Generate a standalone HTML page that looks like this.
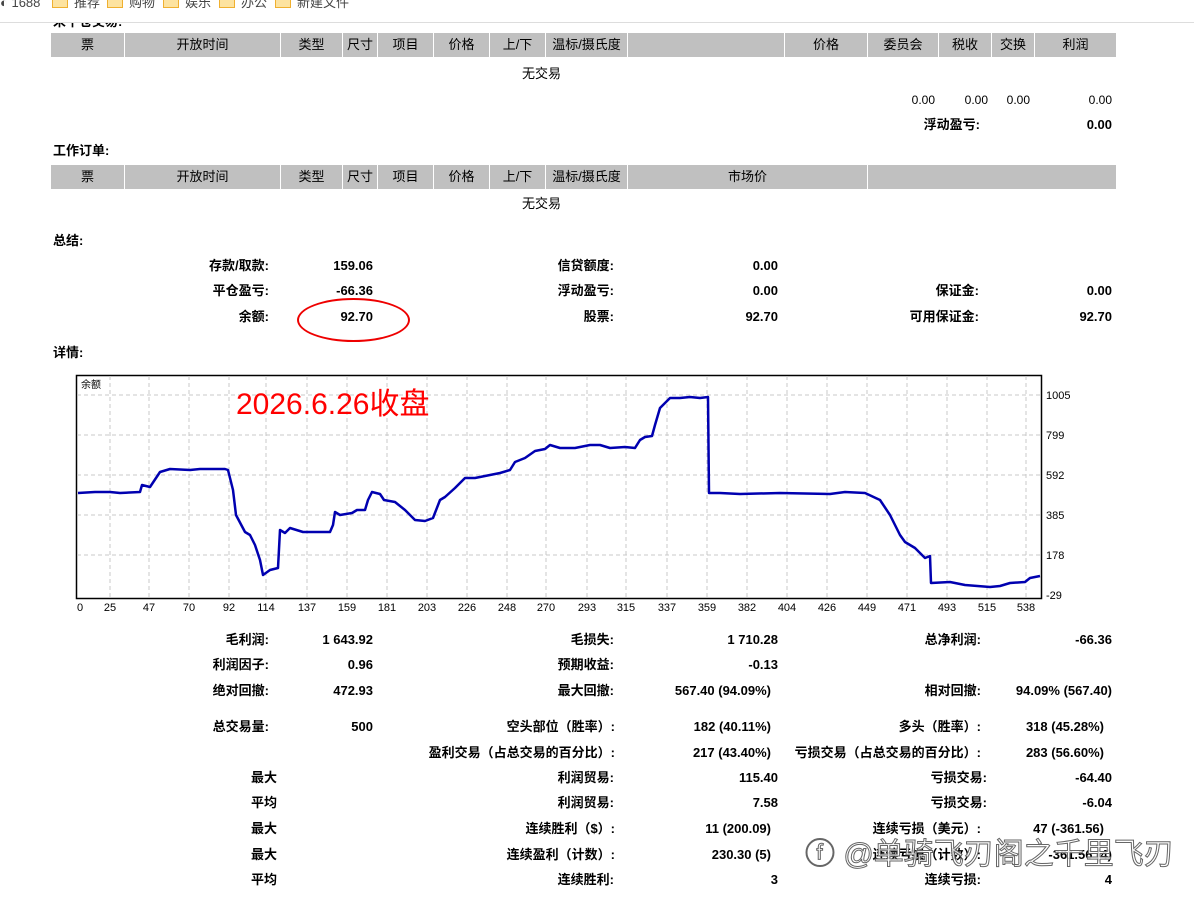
<!DOCTYPE html>
<html><head><meta charset="utf-8"><style>
body{margin:0;width:1194px;height:909px;background:#fff;position:relative;overflow:hidden;font-family:"Liberation Sans","Noto Sans CJK SC",sans-serif;font-size:13px;color:#000}
#w{position:absolute;left:0;top:1px;width:1194px;height:909px}
.a{position:absolute;line-height:16px;white-space:nowrap}
.b{font-weight:bold}
.h{position:absolute;background:#c0c0c0;height:24px;line-height:24px;text-align:center;font-size:13px}
.f{display:inline-block;width:14px;height:11px;background:#fde3a0;border:1px solid #f0b030;margin-right:6px;vertical-align:-1px}
.bm{position:absolute;top:-5px;color:#444;font-size:13px;line-height:16px;white-space:nowrap}
</style></head><body>
<div class="bm" style="left:0">◐ 1688</div>
<div class="bm" style="left:52px"><span class="f"></span>推荐</div>
<div class="bm" style="left:107px"><span class="f"></span>购物</div>
<div class="bm" style="left:163px"><span class="f"></span>娱乐</div>
<div class="bm" style="left:219px"><span class="f"></span>办公</div>
<div class="bm" style="left:275px"><span class="f"></span>新建文件</div>
<div style="position:absolute;left:0;top:22px;width:1194px;height:1px;background:#ddd"></div>
<div id="w">
<div class="a b" style="left:53px;top:13px;clip-path:inset(9px 0 0 0)">未平仓交易:</div>

<div class="h" style="left:51px;top:32px;width:73px">票</div>
<div class="h" style="left:125px;top:32px;width:155px">开放时间</div>
<div class="h" style="left:281px;top:32px;width:61px">类型</div>
<div class="h" style="left:343px;top:32px;width:34px">尺寸</div>
<div class="h" style="left:378px;top:32px;width:55px">项目</div>
<div class="h" style="left:434px;top:32px;width:55px">价格</div>
<div class="h" style="left:490px;top:32px;width:55px">上/下</div>
<div class="h" style="left:546px;top:32px;width:81px">温标/摄氏度</div>
<div class="h" style="left:628px;top:32px;width:156px"></div>
<div class="h" style="left:785px;top:32px;width:82px">价格</div>
<div class="h" style="left:868px;top:32px;width:70px">委员会</div>
<div class="h" style="left:939px;top:32px;width:52px">税收</div>
<div class="h" style="left:992px;top:32px;width:42px">交换</div>
<div class="h" style="left:1035px;top:32px;width:81px">利润</div>
<div class="a" style="left:522px;top:65px">无交易</div>
<div class="a" style="right:259px;top:91px;font-size:12px">0.00</div>
<div class="a" style="right:206px;top:91px;font-size:12px">0.00</div>
<div class="a" style="right:164px;top:91px;font-size:12px">0.00</div>
<div class="a" style="right:82px;top:91px;font-size:12px">0.00</div>
<div class="a b" style="right:214px;top:116px">浮动盈亏:</div>
<div class="a b" style="right:82px;top:116px">0.00</div>

<div class="a b" style="left:53px;top:142px">工作订单:</div>
<div class="h" style="left:51px;top:164px;width:73px">票</div>
<div class="h" style="left:125px;top:164px;width:155px">开放时间</div>
<div class="h" style="left:281px;top:164px;width:61px">类型</div>
<div class="h" style="left:343px;top:164px;width:34px">尺寸</div>
<div class="h" style="left:378px;top:164px;width:55px">项目</div>
<div class="h" style="left:434px;top:164px;width:55px">价格</div>
<div class="h" style="left:490px;top:164px;width:55px">上/下</div>
<div class="h" style="left:546px;top:164px;width:81px">温标/摄氏度</div>
<div class="h" style="left:628px;top:164px;width:239px">市场价</div>
<div class="h" style="left:868px;top:164px;width:248px"></div>
<div class="a" style="left:522px;top:195px">无交易</div>

<div class="a b" style="left:53px;top:232px">总结:</div>
<div class="a b" style="right:925px;top:257px">存款/取款:</div><div class="a b" style="right:821px;top:257px">159.06</div>
<div class="a b" style="right:580px;top:257px">信贷额度:</div><div class="a b" style="right:416px;top:257px">0.00</div>
<div class="a b" style="right:925px;top:282px">平仓盈亏:</div><div class="a b" style="right:821px;top:282px">-66.36</div>
<div class="a b" style="right:580px;top:282px">浮动盈亏:</div><div class="a b" style="right:416px;top:282px">0.00</div>
<div class="a b" style="right:215px;top:282px">保证金:</div><div class="a b" style="right:82px;top:282px">0.00</div>
<div class="a b" style="right:925px;top:308px">余额:</div><div class="a b" style="right:821px;top:308px">92.70</div>
<div class="a b" style="right:580px;top:308px">股票:</div><div class="a b" style="right:416px;top:308px">92.70</div>
<div class="a b" style="right:215px;top:308px">可用保证金:</div><div class="a b" style="right:82px;top:308px">92.70</div>
<div style="position:absolute;left:297px;top:297px;width:109px;height:40px;border:2px solid #e00;border-radius:50%"></div>
<div class="a b" style="left:53px;top:344px">详情:</div>
</div>

<svg style="position:absolute;left:0;top:0" width="1194" height="909">
<rect x="76.5" y="375.5" width="965" height="223" fill="#fff" stroke="#000" stroke-width="1.5"/>
<g stroke="#c8c8c8" stroke-dasharray="4,3" stroke-width="1">
<path d="M77 395H1041M77 435H1041M77 475H1041M77 515H1041M77 555H1041"/>
<path d="M110 376V598M149 376V598M189 376V598M229 376V598M266 376V598M307 376V598M347 376V598M387 376V598M427 376V598M467 376V598M507 376V598M546 376V598M587 376V598M626 376V598M667 376V598M707 376V598M747 376V598M787 376V598M827 376V598M867 376V598M907 376V598M947 376V598M987 376V598M1026 376V598"/>
</g>
<polyline fill="none" stroke="#0000b0" stroke-width="2.5" stroke-linejoin="round" points="78,493 95,492 110,492 120,493 140,492 142,485 150,487 160,472 170,469 190,470 200,469 225,469 228,470 233,490 236,515 245,532 250,535 255,545 260,560 263,575 270,570 278,568 280,530 285,533 290,528 303,532 330,532 333,525 335,512 340,515 352,513 357,510 365,510 368,500 372,492 380,494 384,500 395,502 405,510 415,520 425,521 433,518 440,500 445,497 455,488 460,483 465,478 475,478 490,475 500,473 510,470 515,462 525,458 535,451 545,449 550,445 560,448 575,448 590,445 600,445 610,448 625,447 635,448 640,440 645,437 652,436 655,425 660,408 665,403 670,398 680,398 690,397 700,398 708,397 709,493 720,493 740,494 780,493 830,494 845,492 865,493 880,500 890,515 900,535 905,542 915,548 920,553 925,558 930,556 931,583 950,582 965,585 990,587 1000,586 1010,583 1025,582 1030,578 1040,576"/>
<g font-family="Liberation Sans,sans-serif" font-size="11" fill="#000">
<text x="1046" y="399">1005</text><text x="1046" y="439">799</text><text x="1046" y="479">592</text><text x="1046" y="519">385</text><text x="1046" y="559">178</text><text x="1046" y="599">-29</text>
<g text-anchor="middle">
<text x="80" y="611">0</text><text x="110" y="611">25</text><text x="149" y="611">47</text><text x="189" y="611">70</text><text x="229" y="611">92</text><text x="266" y="611">114</text><text x="307" y="611">137</text><text x="347" y="611">159</text><text x="387" y="611">181</text><text x="427" y="611">203</text><text x="467" y="611">226</text><text x="507" y="611">248</text><text x="546" y="611">270</text><text x="587" y="611">293</text><text x="626" y="611">315</text><text x="667" y="611">337</text><text x="707" y="611">359</text><text x="747" y="611">382</text><text x="787" y="611">404</text><text x="827" y="611">426</text><text x="867" y="611">449</text><text x="907" y="611">471</text><text x="947" y="611">493</text><text x="987" y="611">515</text><text x="1026" y="611">538</text>
</g>
<text x="81" y="388" font-size="10" font-family="Liberation Sans,Noto Sans CJK SC,sans-serif">余额</text>
</g>
<text x="236" y="414" fill="#f00" font-size="30" font-family="Liberation Sans,Noto Sans CJK SC,sans-serif">2026.6.26收盘</text>
</svg>

<div id="w2" style="position:absolute;left:0;top:1px;width:1194px;height:909px">
<div class="a b" style="right:925px;top:631px">毛利润:</div><div class="a b" style="right:821px;top:631px">1 643.92</div>
<div class="a b" style="right:580px;top:631px">毛损失:</div><div class="a b" style="right:416px;top:631px">1 710.28</div>
<div class="a b" style="right:213px;top:631px">总净利润:</div><div class="a b" style="right:82px;top:631px">-66.36</div>
<div class="a b" style="right:925px;top:656px">利润因子:</div><div class="a b" style="right:821px;top:656px">0.96</div>
<div class="a b" style="right:580px;top:656px">预期收益:</div><div class="a b" style="right:416px;top:656px">-0.13</div>
<div class="a b" style="right:925px;top:682px">绝对回撤:</div><div class="a b" style="right:821px;top:682px">472.93</div>
<div class="a b" style="right:580px;top:682px">最大回撤:</div><div class="a b" style="right:423px;top:682px">567.40 (94.09%)</div>
<div class="a b" style="right:213px;top:682px">相对回撤:</div><div class="a b" style="right:82px;top:682px">94.09% (567.40)</div>
<div class="a b" style="right:925px;top:718px">总交易量:</div><div class="a b" style="right:821px;top:718px">500</div>
<div class="a b" style="right:579px;top:718px">空头部位（胜率）:</div><div class="a b" style="right:423px;top:718px">182 (40.11%)</div>
<div class="a b" style="right:213px;top:718px">多头（胜率）:</div><div class="a b" style="right:90px;top:718px">318 (45.28%)</div>
<div class="a b" style="right:579px;top:744px">盈利交易（占总交易的百分比）:</div><div class="a b" style="right:423px;top:744px">217 (43.40%)</div>
<div class="a b" style="right:213px;top:744px">亏损交易（占总交易的百分比）:</div><div class="a b" style="right:90px;top:744px">283 (56.60%)</div>
<div class="a b" style="right:917px;top:769px">最大</div><div class="a b" style="right:580px;top:769px">利润贸易:</div><div class="a b" style="right:416px;top:769px">115.40</div>
<div class="a b" style="right:207px;top:769px">亏损交易:</div><div class="a b" style="right:82px;top:769px">-64.40</div>
<div class="a b" style="right:917px;top:794px">平均</div><div class="a b" style="right:580px;top:794px">利润贸易:</div><div class="a b" style="right:416px;top:794px">7.58</div>
<div class="a b" style="right:207px;top:794px">亏损交易:</div><div class="a b" style="right:82px;top:794px">-6.04</div>
<div class="a b" style="right:917px;top:820px">最大</div><div class="a b" style="right:579px;top:820px">连续胜利（$）:</div><div class="a b" style="right:423px;top:820px">11 (200.09)</div>
<div class="a b" style="right:213px;top:820px">连续亏损（美元）:</div><div class="a b" style="right:90px;top:820px">47 (-361.56)</div>
<div class="a b" style="right:917px;top:846px">最大</div><div class="a b" style="right:579px;top:846px">连续盈利（计数）:</div><div class="a b" style="right:423px;top:846px">230.30 (5)</div>
<div class="a b" style="right:213px;top:846px">连续亏损（计数）:</div><div class="a b" style="right:82px;top:846px">-361.56 (4)</div>
<div class="a b" style="right:917px;top:871px">平均</div><div class="a b" style="right:580px;top:871px">连续胜利:</div><div class="a b" style="right:416px;top:871px">3</div>
<div class="a b" style="right:213px;top:871px">连续亏损:</div><div class="a b" style="right:82px;top:871px">4</div>
<div class="a" style="left:805px;top:836px;font-size:30px;line-height:36px;color:rgba(255,255,255,0.85);-webkit-text-stroke:1px #666">ⓕ @单骑飞刃阁之千里飞刃</div>
</div>
</body></html>
